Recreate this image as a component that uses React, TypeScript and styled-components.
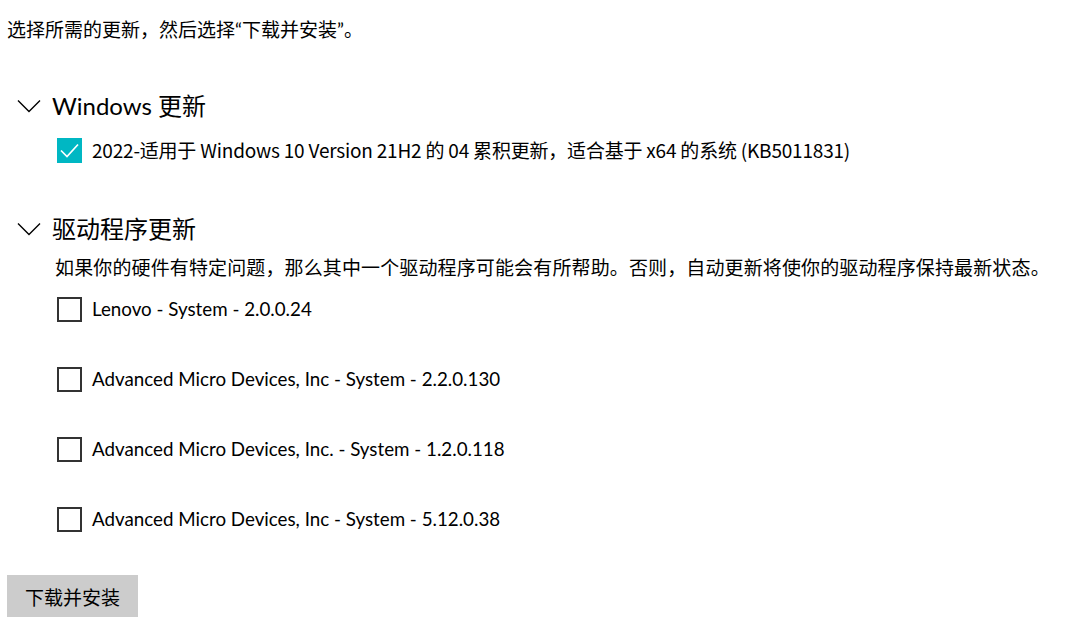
import React, { useState } from 'react'
import styled, { createGlobalStyle } from 'styled-components'

const GlobalStyle = createGlobalStyle`
  html, body {
    margin: 0;
    padding: 0;
    background: #fff;
  }
  body {
    font-family: "Lato", "Noto Sans CJK SC", sans-serif;
    color: #000;
  }
`

type Update = { id: string; title: string; cjk?: boolean }

const windowsUpdates: Update[] = [
  { id: 'kb5011831', title: '2022-适用于 Windows 10 Version 21H2 的 04 累积更新，适合基于 x64 的系统 (KB5011831)', cjk: true },
]

const driverUpdates: Update[] = [
  { id: 'lenovo', title: 'Lenovo - System - 2.0.0.24' },
  { id: 'amd1', title: 'Advanced Micro Devices, Inc - System - 2.2.0.130' },
  { id: 'amd2', title: 'Advanced Micro Devices, Inc. - System - 1.2.0.118' },
  { id: 'amd3', title: 'Advanced Micro Devices, Inc - System - 5.12.0.38' },
]

function Chevron() {
  return (
    <svg width="24" height="14" viewBox="0 0 24 14">
      <polyline points="1,1.5 12,12.5 23,1.5" fill="none" stroke="#000" strokeWidth="1.4" />
    </svg>
  )
}

function CheckMark() {
  return (
    <svg width="25" height="25" viewBox="0 0 25 25">
      <polyline points="4,12.5 10,18.5 21,6.5" fill="none" stroke="#fff" strokeWidth="1.7" />
    </svg>
  )
}

export default function App() {
  const [checked, setChecked] = useState<Record<string, boolean>>({ kb5011831: true })

  const toggle = (id: string) => setChecked(prev => ({ ...prev, [id]: !prev[id] }))

  return (
    <Page>
      <GlobalStyle />
      <Intro>选择所需的更新，然后选择“下载并安装”。</Intro>

      <SectionHeader $top={45}>
        <ChevronWrap><Chevron /></ChevronWrap>
        <SectionTitle>Windows 更新</SectionTitle>
      </SectionHeader>
      {windowsUpdates.map(u => (
        <ItemRow key={u.id} $top={6} onClick={() => toggle(u.id)}>
          <Box $checked={!!checked[u.id]}>{checked[u.id] && <CheckMark />}</Box>
          <ItemLabel $cjk={u.cjk}>{u.title}</ItemLabel>
        </ItemRow>
      ))}

      <SectionHeader $top={41}>
        <ChevronWrap><Chevron /></ChevronWrap>
        <SectionTitle>驱动程序更新</SectionTitle>
      </SectionHeader>
      <Description>如果你的硬件有特定问题，那么其中一个驱动程序可能会有所帮助。否则，自动更新将使你的驱动程序保持最新状态。</Description>
      {driverUpdates.map((u, i) => (
        <ItemRow key={u.id} $top={i === 0 ? 8 : 30} onClick={() => toggle(u.id)}>
          <Box $checked={!!checked[u.id]}>{checked[u.id] && <CheckMark />}</Box>
          <ItemLabel $cjk={u.cjk}>{u.title}</ItemLabel>
        </ItemRow>
      ))}

      <InstallButton>下载并安装</InstallButton>
    </Page>
  )
}

const Page = styled.div`
  display: flex;
  flex-direction: column;
  align-items: flex-start;
  padding: 17px 0 0 7px;
  font-size: 19px;
`

const Intro = styled.div`
  height: 26px;
  line-height: 26px;
  white-space: nowrap;
`

const SectionHeader = styled.div<{ $top: number }>`
  display: flex;
  align-items: center;
  height: 36px;
  margin-top: ${p => p.$top}px;
`

const ChevronWrap = styled.span`
  display: flex;
  margin-left: 10px;
  width: 35px;
`

const SectionTitle = styled.span`
  font-size: 24px;
  line-height: 36px;
  white-space: nowrap;
`

const ItemRow = styled.label<{ $top: number }>`
  display: flex;
  align-items: center;
  gap: 10px;
  height: 40px;
  margin-top: ${p => p.$top}px;
  margin-left: 50px;
  cursor: pointer;
`

const Box = styled.span<{ $checked: boolean }>`
  box-sizing: border-box;
  display: flex;
  width: 25px;
  height: 25px;
  background: ${p => (p.$checked ? '#00b7c3' : '#fff')};
  border: ${p => (p.$checked ? 'none' : '2.5px solid #333')};
`

const ItemLabel = styled.span<{ $cjk?: boolean }>`
  font-family: ${p => (p.$cjk ? '"Noto Sans CJK SC", sans-serif' : '"Lato", "Noto Sans CJK SC", sans-serif')};
  font-size: ${p => (p.$cjk ? '19px' : '18.75px')};
  letter-spacing: ${p => (p.$cjk ? '-0.2px' : 'normal')};
  line-height: 26px;
  white-space: nowrap;
`

const Description = styled.div`
  height: 26px;
  line-height: 26px;
  margin-top: 8px;
  margin-left: 48px;
  letter-spacing: 0.13px;
  white-space: nowrap;
`

const InstallButton = styled.button`
  margin-top: 36px;
  width: 131px;
  height: 42px;
  border: none;
  padding: 0;
  background: #cccccc;
  color: #000;
  font-family: inherit;
  font-size: 19px;
  cursor: pointer;
`
